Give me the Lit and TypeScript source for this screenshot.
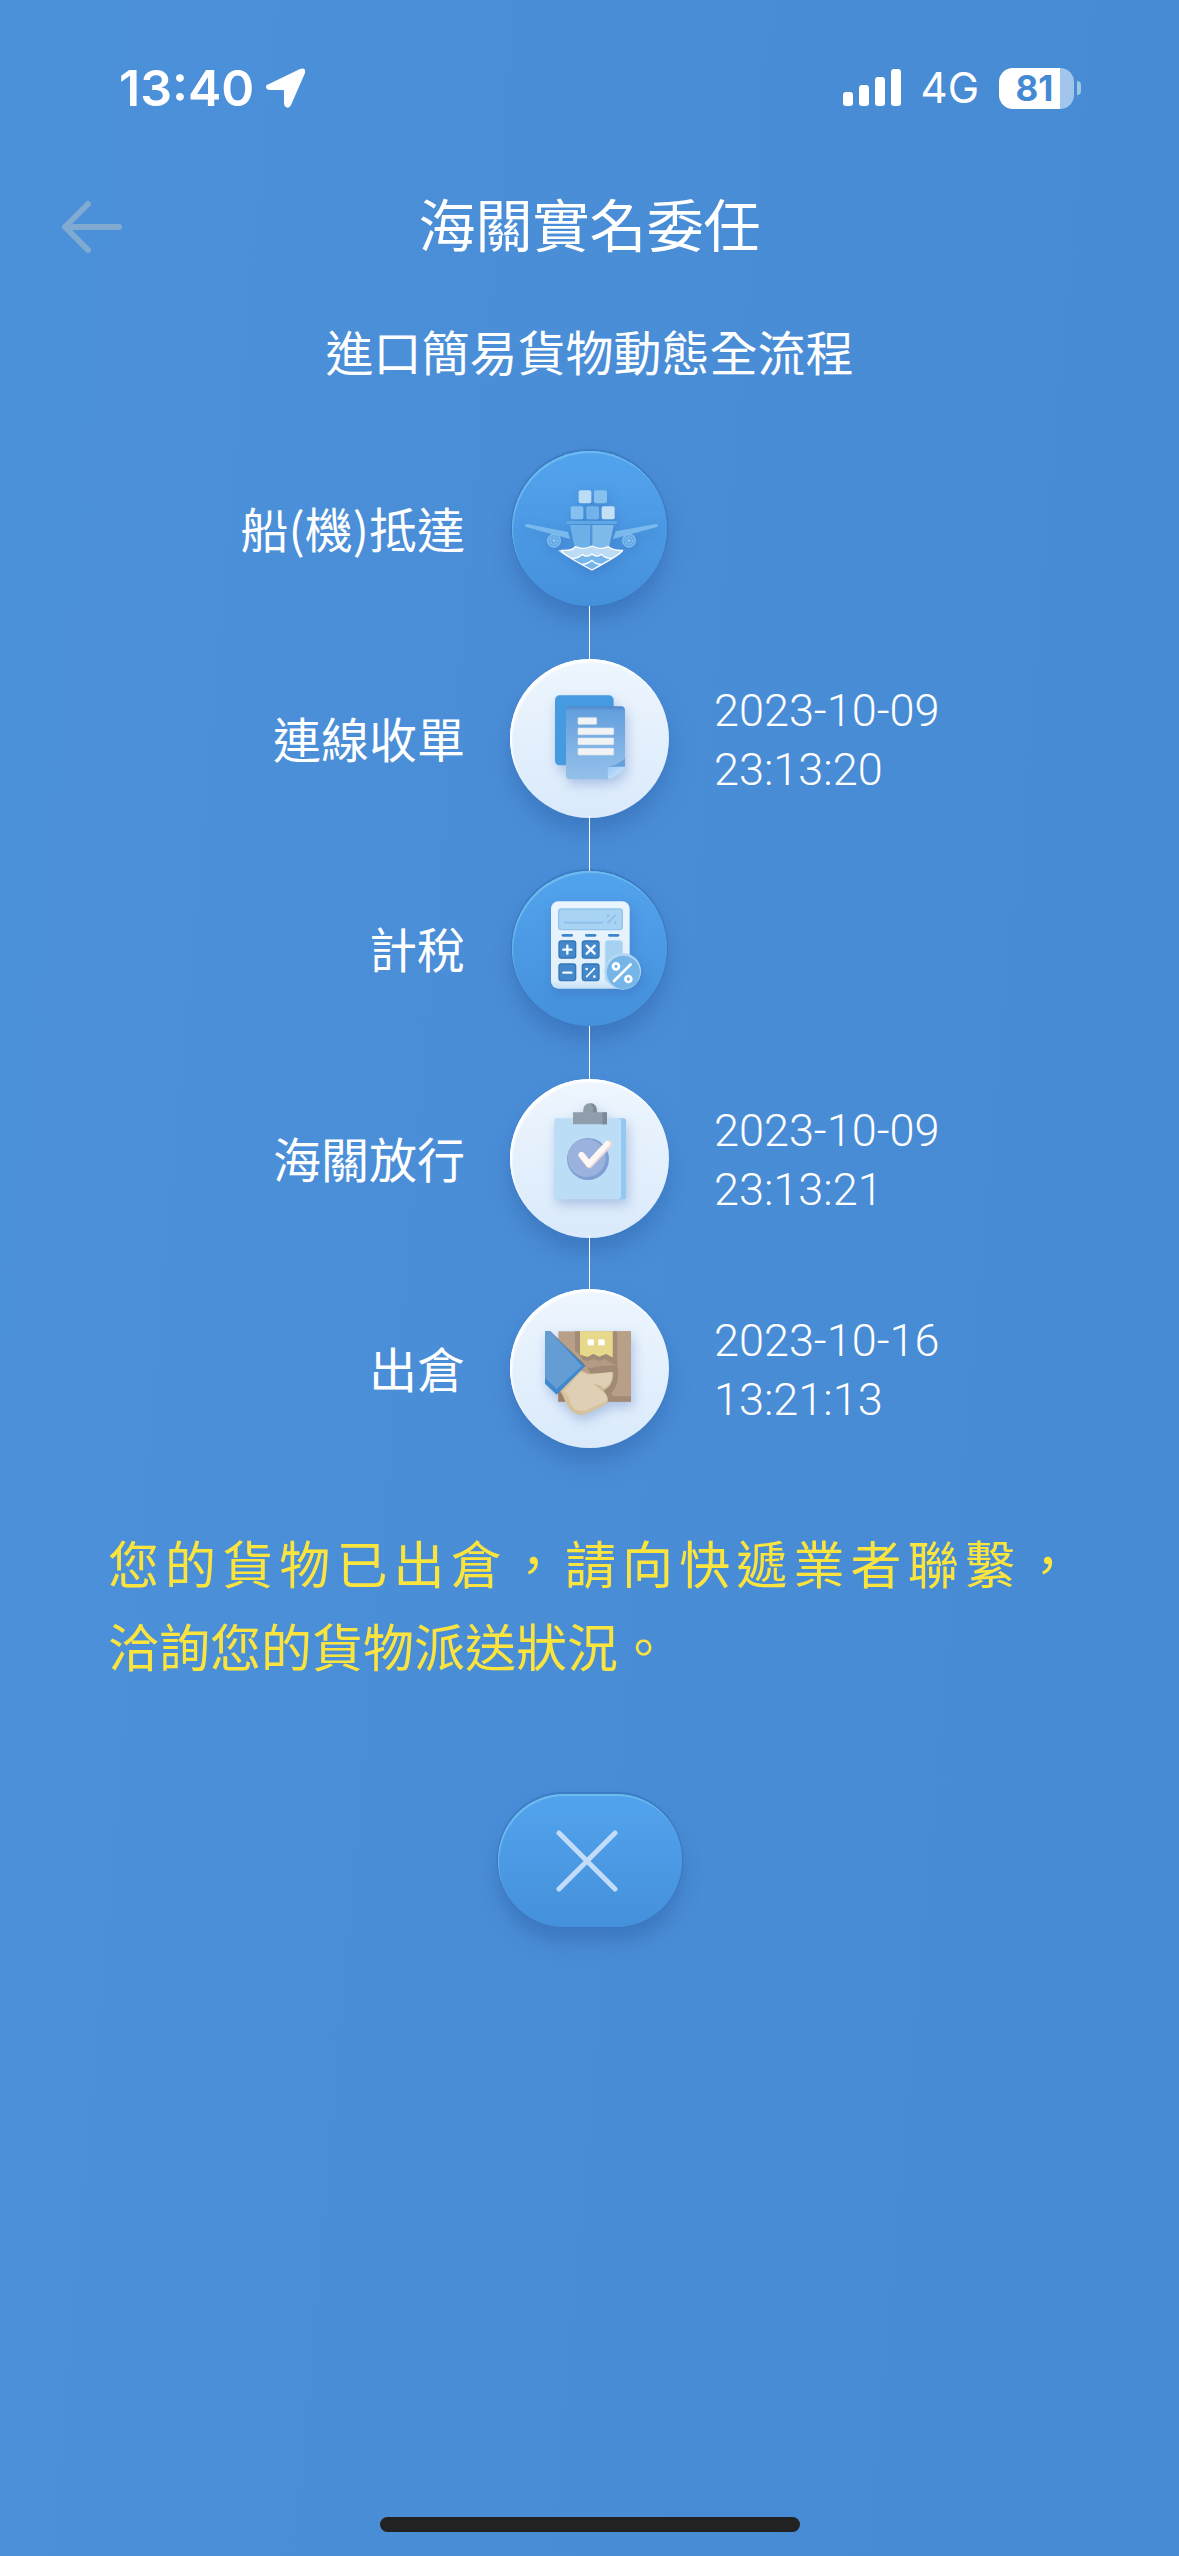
import { LitElement, html, css, svg, nothing } from "lit";
import { customElement, property } from "lit/decorators.js";
import { classMap } from "lit/directives/class-map.js";

type IconName = "ship" | "document" | "calculator" | "clipboard" | "parcel";

interface Step {
  label: string;
  icon: IconName;
  date?: string;
  time?: string;
}

const STEPS: Step[] = [
  { label: "船(機)抵達", icon: "ship" },
  { label: "連線收單", icon: "document", date: "2023-10-09", time: "23:13:20" },
  { label: "計稅", icon: "calculator" },
  { label: "海關放行", icon: "clipboard", date: "2023-10-09", time: "23:13:21" },
  { label: "出倉", icon: "parcel", date: "2023-10-16", time: "13:21:13" },
];

const ship = svg`
  <g transform="translate(3 0)">
    <rect x="263" y="180" width="38" height="39" rx="6" fill="#bcdcf6"/>
    <rect x="309" y="180" width="39" height="39" rx="6" fill="#85c0ee"/>
    <rect x="239" y="228" width="38" height="39" rx="6" fill="#85c0ee"/>
    <rect x="286" y="228" width="38" height="39" rx="6" fill="#72b3ea"/>
    <rect x="332" y="228" width="39" height="39" rx="6" fill="#c4e0f7"/>
    <path d="M103 283q2-3 6-2L231 305l6 21-132-36q-4-3-2-7Z" fill="#79b9ec"/>
    <path d="M500 283q-2-3-6-2L374 303l-8 23 132-36q4-3 2-7Z" fill="#79b9ec"/>
    <g fill="#5da7e5" stroke="#85bfed" stroke-width="4">
      <circle cx="189" cy="331" r="19"/><circle cx="414" cy="331" r="19"/>
    </g>
    <g fill="none" stroke="#85bfed" stroke-width="5" stroke-dasharray="5 3">
      <circle cx="189" cy="331" r="11"/><circle cx="414" cy="331" r="11"/>
    </g>
    <g fill="#9ccbf1"><circle cx="189" cy="331" r="4"/><circle cx="414" cy="331" r="4"/></g>
    <path d="M237 284h61v68h-47Z" fill="#6db0e7"/>
    <path d="M304 284h64l-14 68h-50Z" fill="#7ebaea"/>
    <path d="M301 284v64" stroke="#5199db" stroke-width="3"/>
    <rect x="226" y="272" width="152" height="9" rx="3" fill="#5fa8e4"/>
    <path d="M211 360q30 2 43-11 24 11 49-2 24 13 49 2 16 12 43 11-4 12-92 59Q215 373 211 360Z" fill="#76b5e9"/>
    <path d="M211 360q30 2 43-11 24 11 49-2 24 13 49 2 16 12 43 11-8 14-32 25-20-1-31-12-16 11-29-2-15 13-30 2-12 12-31 12-30-13-41-25Z" fill="#bcdcf5"/>
    <g fill="none" stroke="#fff" stroke-width="4" stroke-linejoin="round" stroke-linecap="round">
      <path d="M211 360q30 2 43-11 24 11 49-2 24 13 49 2 16 12 43 11-4 12-92 59Q215 373 211 360Z"/>
      <path d="M242 384q22 0 31-12 16 11 30-1 14 12 29 1 10 13 32 12"/>
      <path d="M272 402q18 0 31-12 12 13 30 12"/>
    </g>
  </g>`;

const documentIcon = svg`
  <defs>
    <linearGradient id="sheet" x1="0" y1="0" x2="0" y2="1">
      <stop offset="0" stop-color="#4f86c9"/><stop offset=".06" stop-color="#639fdd"/>
      <stop offset=".6" stop-color="#82b4e6"/><stop offset="1" stop-color="#94c0ea"/>
    </linearGradient>
    <linearGradient id="fold" x1="0" y1="0" x2="1" y2="1">
      <stop offset="0" stop-color="#9dc9f5"/><stop offset=".5" stop-color="#b9dafa"/>
    </linearGradient>
  </defs>
  <rect x="195" y="165" width="176" height="210" rx="14" fill="#459ae0"/>
  <path d="M240 198h153q12 0 12 12v168l-50 39H240q-12 0-12-12V210q0-12 12-12Z" fill="url(#sheet)"/>
  <path d="M355 378q30-3 50-24v24l-50 39Z" fill="#679fd9"/>
  <path d="M353 379h52q-9 24-51 38Z" fill="url(#fold)"/>
  <g fill="#f1f3f5" stroke="#d9e4ef" stroke-width="2">
    <rect x="264" y="232" width="56" height="20" rx="2"/>
    <rect x="264" y="263" width="107" height="20" rx="2"/>
    <rect x="264" y="293" width="107" height="20" rx="2"/>
    <rect x="264" y="324" width="107" height="20" rx="2"/>
  </g>`;

const calculator = svg`
  <defs>
    <linearGradient id="calc" x1="0" y1="0" x2="0" y2="1">
      <stop offset="0" stop-color="#eaf5fd"/><stop offset=".9" stop-color="#e0effb"/><stop offset="1" stop-color="#c6e0f6"/>
    </linearGradient>
  </defs>
  <rect x="183" y="153" width="236" height="262" rx="22" fill="url(#calc)"/>
  <rect x="206" y="176" width="191" height="62" rx="8" fill="#a9d3f2" stroke="#93c5ec" stroke-width="4"/>
  <path d="M222 217h118M352 219l26-26" stroke="#8bc0ea" stroke-width="5"/>
  <circle cx="354" cy="196" r="4" fill="#8bc0ea"/><circle cx="376" cy="217" r="4" fill="#8bc0ea"/>
  <g fill="#3d86cc">
    <rect x="215" y="251" width="34" height="8" rx="4"/>
    <rect x="285" y="251" width="34" height="8" rx="4"/>
    <rect x="354" y="251" width="34" height="8" rx="4"/>
  </g>
  <g fill="#4388cb" stroke="#3576b8" stroke-width="4">
    <rect x="207" y="272" width="50" height="51" rx="7"/>
    <rect x="277" y="272" width="50" height="51" rx="7"/>
    <rect x="207" y="341" width="50" height="50" rx="7"/>
    <rect x="277" y="341" width="50" height="50" rx="7"/>
  </g>
  <g stroke="#f4fafe" stroke-width="7" stroke-linecap="round">
    <path d="M220 298h24M232 286v24M290 286l24 24M314 286l-24 24M220 367h24"/>
    <path d="M290 379l23-24" stroke-width="5"/>
  </g>
  <g fill="#f4fafe"><circle cx="290" cy="356" r="4"/><circle cx="313" cy="379" r="4"/></g>
  <rect x="346" y="271" width="51" height="122" rx="7" fill="#a6d1f1" stroke="#b6daf4" stroke-width="3"/>
  <circle cx="398" cy="363" r="55" fill="#b4d8f4"/>
  <circle cx="400" cy="366" r="50" fill="#76b5e8"/>
  <g fill="none" stroke="#fff" stroke-width="8" stroke-linecap="round">
    <path d="M372 392l50-50"/><circle cx="378" cy="348" r="9"/><circle cx="415" cy="386" r="9"/>
  </g>`;

const clipboard = svg`
  <path d="M385 174h15q8 0 8 8v227q0 8-8 8h-18Z" fill="#94c8f1"/>
  <path d="M200 174h186q7 0 7 7v226q0 10-10 10H200q-7 0-7-7V181q0-7 7-7Z" fill="#bbddf5"/>
  <path d="M249 156h30q0-27 21-27t21 27h30v36H249Z" fill="#909dab"/>
  <path d="M300 129q21 0 21 27h-13q6-14-8-27Z" fill="#7e8a97"/>
  <path d="M337 156h14v36h-14Z" fill="#7e8a97"/>
  <circle cx="294" cy="296" r="63" fill="#7f9fd4"/>
  <circle cx="290" cy="293" r="57" fill="#9ab2dd"/>
  <g fill="none" stroke-linecap="round" stroke-linejoin="round" stroke-width="20">
    <path d="M276 286l22 28 60-63" stroke="#e9d8d9"/>
    <path d="M274 283l22 28 56-61" stroke="#fdf7f5" stroke-width="17"/>
  </g>`;

const parcel = svg`
  <rect x="205" y="183" width="218" height="211" fill="#b89f88"/>
  <path d="M205 362q20 12 20 32h-20Z" fill="#9a806a"/>
  <path d="M255 183h15v70l-15-10ZM369 183h13v100h-13Z" fill="#a28b77"/>
  <path d="M270 183h98v79l-20-10-20 8-18-8-18 10-22-6Z" fill="#e6d98c"/>
  <rect x="293" y="207" width="19" height="18" fill="#fffefa"/>
  <rect x="325" y="207" width="19" height="18" fill="#fffefa"/>
  <path d="M268 252l24 8 18-9 19 8 19-8 21 11 13 16v8q3 14 2 30 0 52 39 62v16H350Z" fill="#a18a76"/>
  <path d="M272 267l20 6 18-8 19 7 18-7q10 15 36 19-60 3-82 10-25-1-29-27Z" fill="#b39a84"/>
  <path d="M382 183h41v195h-42q-13 0-18-8 24-23 21-67Z" fill="#b89f88"/>
  <path d="M271 300l24 10q38-1 74-5 4 42-32 56l16 22q3 14-7 20l-58 27q-15 8-34-1-15-8-24-27l-18-40Z" fill="#d6c29d"/>
  <path d="M273 305l22 8q32-1 70-8 6 33-26 50l-6-5q-10-9-22-9 25 12 38 33 8 13-5 21l-53 24q-18 7-35-2-13-7-17-27-8-22-18-27Z" fill="#dfcfb5"/>
  <path d="M310 342q20-4 36 18l-11 3q-8-12-25-21Z" fill="#cdb994"/>
  <path d="M180 183l106 103-8 3Z" stroke="#c38d5d" stroke-width="3"/>
  <path d="M165 183h15l106 104-86 86-35-33Z" fill="#4189cf"/>
  <path d="M165 183h15l95 104-75 69-35-34Z" fill="#649dd3"/>`;

const ICONS = { ship, document: documentIcon, calculator, clipboard, parcel };

@customElement("status-bar")
export class StatusBar extends LitElement {
  @property() time = "";
  @property() network = "";
  @property({ type: Number }) battery = 0;

  static styles = css`
    :host {
      display: flex;
      align-items: center;
      justify-content: space-between;
      height: 56px;
      padding: 60px 98px 0 119px;
      color: #fff;
      font-family: Inter, "Liberation Sans", sans-serif;
    }
    .group { display: flex; align-items: center; }
    .time { font-size: 50px; font-weight: 600; line-height: 56px; }
    .location { width: 40px; height: 40px; margin-left: 12px; }
    .signal { width: 58px; height: 38px; }
    .network { margin: 0 20px; font-size: 42px; font-weight: 400; line-height: 56px; }
    .battery {
      box-sizing: border-box;
      display: flex;
      align-items: center;
      justify-content: center;
      width: 75px;
      height: 41px;
      padding-right: 4px;
      border-radius: 14px;
      color: #4489d3;
      font-size: 35px;
      font-weight: 700;
      line-height: 41px;
    }
    .nub {
      width: 4px;
      height: 14px;
      margin-left: 3px;
      border-radius: 0 4px 4px 0;
      background: #a2c6eb;
    }
  `;

  render() {
    const fill = `background:linear-gradient(90deg,#fff ${this.battery}%,#a2c6eb ${this.battery}%)`;
    return html`
      <div class="group">
        <span class="time">${this.time}</span>
        <svg class="location" viewBox="0 0 40 40" aria-hidden="true">
          <path d="M3 16 34 1q6-2 5 4L25 37q-2 4-5 2-2-1-2-4V23q0-1-1-1H4q-4-.5-4-3t3-3Z" fill="#fff"/>
        </svg>
      </div>
      <div class="group">
        <svg class="signal" viewBox="0 0 58 38" fill="#fff" aria-hidden="true">
          <rect x="0" y="23" width="10" height="14" rx="3"/>
          <rect x="16" y="16" width="10" height="21" rx="3"/>
          <rect x="32" y="8" width="10" height="29" rx="3"/>
          <rect x="48" y="0" width="10" height="37" rx="3"/>
        </svg>
        <span class="network">${this.network}</span>
        <span class="battery" style=${fill}>${this.battery}</span>
        <span class="nub"></span>
      </div>
    `;
  }
}

@customElement("flow-step")
export class FlowStep extends LitElement {
  @property({ attribute: false }) step!: Step;
  @property({ type: Boolean }) last = false;

  static styles = css`
    :host {
      display: grid;
      grid-template-columns: 1fr 159px 1fr;
      column-gap: 45px;
      align-items: center;
      justify-items: center;
    }
    .label { justify-self: end; padding-bottom: 4px; font-size: 48px; line-height: 56px; }
    .node {
      position: relative;
      z-index: 1;
      display: flex;
      align-items: center;
      justify-content: center;
      width: 155px;
      height: 155px;
      margin: 2px;
      border-radius: 50%;
      background: linear-gradient(#52a3ed, #4590db);
      box-shadow: 0 -1px 1px 1px rgba(45, 105, 175, 0.45), 0 14px 22px rgba(40, 90, 160, 0.42),
        inset 1px 2px 1px rgba(130, 205, 245, 0.6);
    }
    .node.done {
      width: 159px;
      height: 159px;
      margin: 0;
      background: linear-gradient(#eef6fe, #daeafb);
      box-shadow: 0 14px 22px rgba(40, 90, 160, 0.4), inset 2px 3px 2px #fff;
    }
    .icon {
      flex: none;
      width: 159px;
      height: 159px;
      filter: drop-shadow(2px 5px 6px rgba(50, 90, 170, 0.3));
    }
    .when {
      justify-self: start;
      padding-top: 2px;
      font-family: Roboto, "Liberation Sans", sans-serif;
      font-size: 45px;
      font-weight: 300;
      line-height: 59px;
    }
    .when span { display: block; }
    .link {
      position: relative;
      z-index: 2;
      grid-column: 2;
      width: 1px;
      height: 55px;
      margin: -2px 0;
      background: #fff;
    }
  `;

  render() {
    const { label, icon, date, time } = this.step;
    return html`
      <span class="label">${label}</span>
      <span class=${classMap({ node: true, done: !!date })}>
        <svg class="icon" viewBox="60 56 477 477" aria-hidden="true">${ICONS[icon]}</svg>
      </span>
      ${date
        ? html`<time class="when" datetime="${date}T${time}"><span>${date}</span><span>${time}</span></time>`
        : html`<span></span>`}
      ${this.last ? nothing : html`<span class="link"></span>`}
    `;
  }
}

@customElement("app-root")
export class AppRoot extends LitElement {
  static styles = css`
    :host {
      box-sizing: border-box;
      display: flex;
      flex-direction: column;
      min-height: 100vh;
      padding-bottom: 24px;
      background: linear-gradient(95deg, #4b91da, #4a8dd7 50%, #458ad2);
      color: #fff;
      font-family: "Noto Sans CJK TC", sans-serif;
      font-weight: 400;
    }
    button {
      padding: 0;
      border: 0;
      background: none;
      cursor: pointer;
    }
    .header {
      display: grid;
      grid-template-columns: 1fr auto 1fr;
      align-items: center;
      height: 96px;
      margin-top: 60px;
      padding: 0 62px;
    }
    .back { display: flex; justify-self: start; padding: 24px 0 18px; }
    .back svg { width: 60px; height: 52px; }
    h1, h2, p, ol { margin: 0; padding: 0; font-weight: inherit; }
    h1 { padding-bottom: 4px; font-size: 57px; line-height: 64px; }
    h2 { margin-top: 46px; font-size: 48px; line-height: 64px; text-align: center; }
    .steps { margin-top: 67px; list-style: none; }
    .notice {
      margin: 73px 106px 0 108px;
      color: #fbe43e;
      font-size: 51px;
      line-height: 83px;
    }
    .notice span { display: block; }
    .spread { text-align: justify; text-align-last: justify; text-justify: inter-character; }
    .close {
      box-sizing: border-box;
      display: flex;
      align-items: center;
      justify-content: center;
      align-self: center;
      width: 184px;
      height: 133px;
      margin-top: 107px;
      padding-right: 6px;
      border-radius: 66px;
      background: linear-gradient(#52a3ed, #4590db);
      box-shadow: 0 -1px 1px 1px rgba(45, 105, 175, 0.45), 0 14px 20px rgba(40, 90, 160, 0.42),
        inset 1px 2px 1px rgba(130, 205, 245, 0.6);
    }
    .close svg { width: 62px; height: 62px; }
    .home {
      align-self: center;
      width: 420px;
      max-width: 60%;
      height: 15px;
      margin-top: auto;
      border-radius: 8px;
      background: #222;
    }
  `;

  render() {
    return html`
      <status-bar time="13:40" network="4G" battery="81"></status-bar>
      <header class="header">
        <button class="back" aria-label="返回">
          <svg viewBox="0 0 60 52" fill="none" stroke="#80aad1" stroke-width="6" stroke-linecap="round" stroke-linejoin="round">
            <path d="M57 26H4M26 3 3 26l23 23"/>
          </svg>
        </button>
        <h1>海關實名委任</h1>
      </header>
      <h2>進口簡易貨物動態全流程</h2>
      <ol class="steps">
        ${STEPS.map(
          (step, i) => html`<li><flow-step .step=${step} ?last=${i === STEPS.length - 1}></flow-step></li>`,
        )}
      </ol>
      <p class="notice"><span class="spread">您的貨物已出倉，請向快遞業者聯繫，</span><span>洽詢您的貨物派送狀況。</span></p>
      <button class="close" aria-label="關閉">
        <svg viewBox="0 0 62 62" stroke="#c2dcfa" stroke-width="5" stroke-linecap="round">
          <path d="M3 3 59 59M59 3 3 59"/>
        </svg>
      </button>
      <div class="home"></div>
    `;
  }
}
